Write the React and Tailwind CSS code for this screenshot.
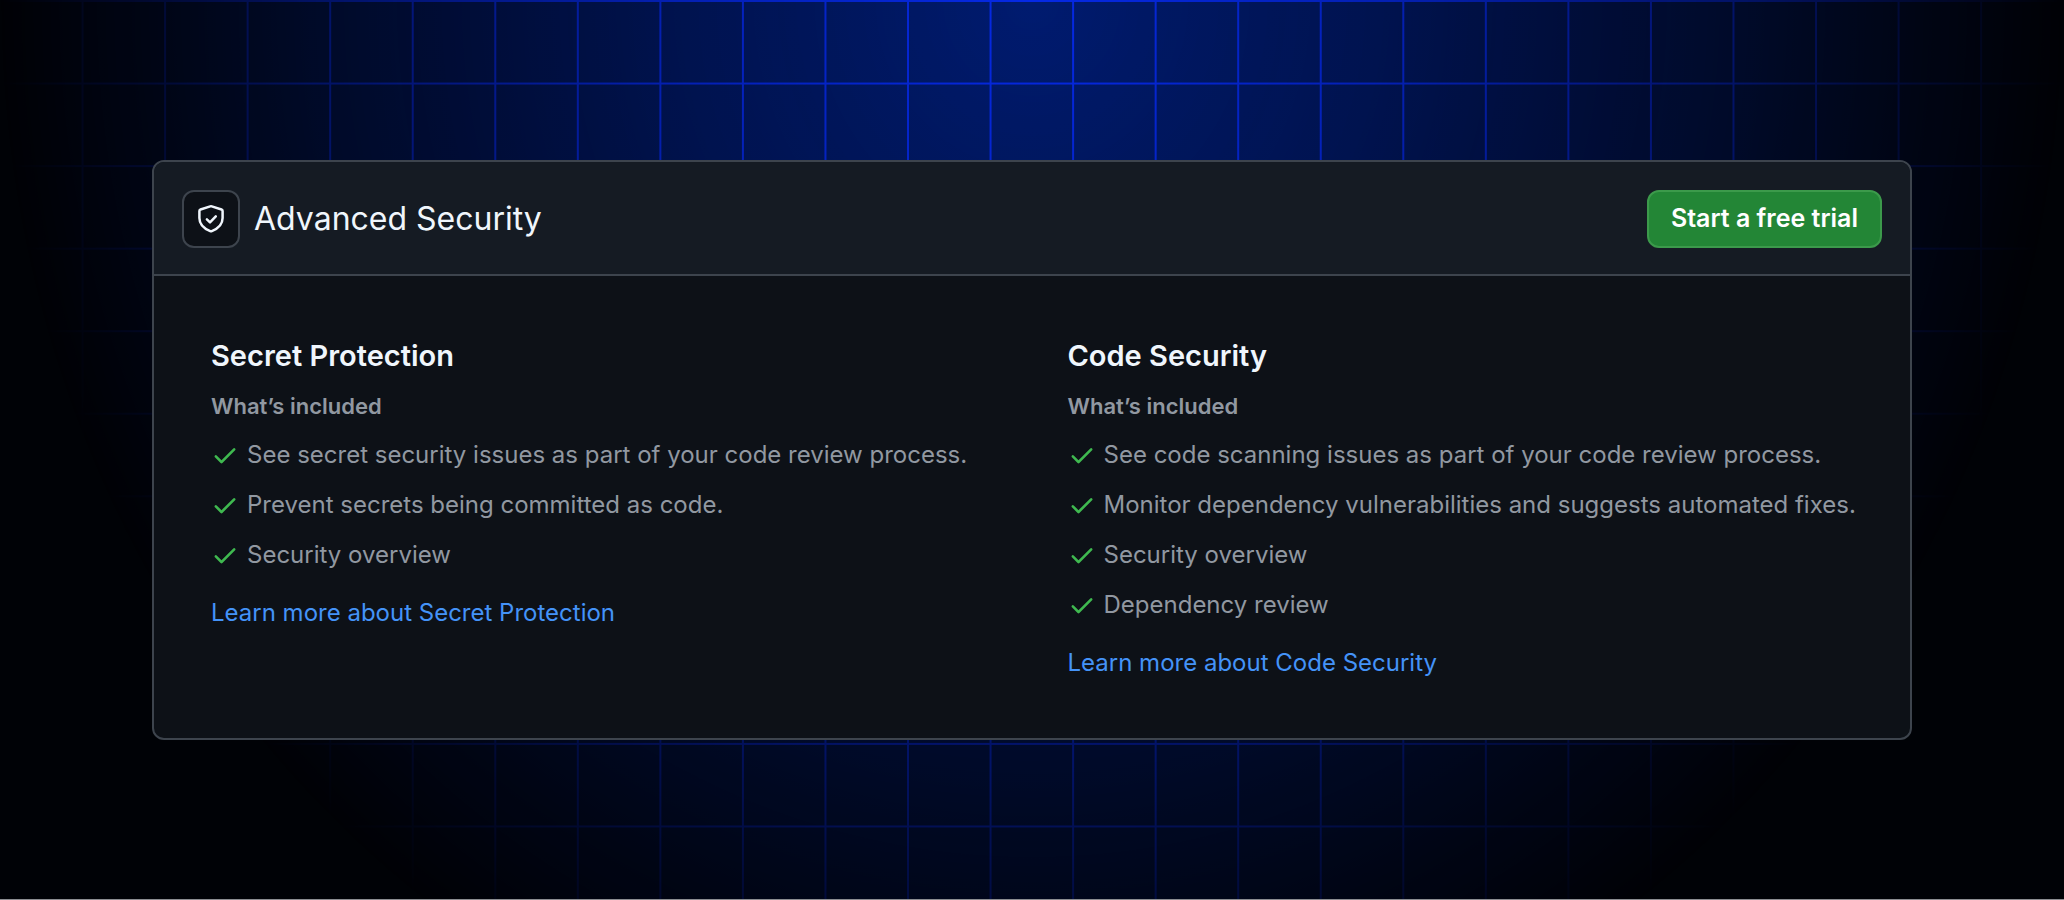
const products = [
  {
    name: "Secret Protection",
    features: [
      "See secret security issues as part of your code review process.",
      "Prevent secrets being committed as code.",
      "Security overview",
    ],
  },
  {
    name: "Code Security",
    features: [
      "See code scanning issues as part of your code review process.",
      "Monitor dependency vulnerabilities and suggests automated fixes.",
      "Security overview",
      "Dependency review",
    ],
  },
];

function CheckIcon({ className }) {
  return (
    <svg viewBox="0 0 16 16" fill="currentColor" aria-hidden="true" className={className}>
      <path d="M13.78 4.22a.75.75 0 0 1 0 1.06l-7.25 7.25a.75.75 0 0 1-1.06 0L2.22 9.28a.751.751 0 0 1 .018-1.042.751.751 0 0 1 1.042-.018L6 10.94l6.72-6.72a.75.75 0 0 1 1.06 0Z" />
    </svg>
  );
}

function ShieldCheckIcon({ className }) {
  return (
    <svg
      viewBox="0 0 30 30"
      fill="none"
      stroke="currentColor"
      strokeWidth="2.5"
      strokeLinecap="round"
      strokeLinejoin="round"
      aria-hidden="true"
      className={className}
    >
      <path d="M14.2 2.4 4.5 5.5a1.6 1.6 0 0 0-1.1 1.5V14c0 6 3.6 10.2 10.8 13.1a2.2 2.2 0 0 0 1.6 0C23 24.2 26.6 20 26.6 14V7a1.6 1.6 0 0 0-1.1-1.5l-9.7-3.1a2.6 2.6 0 0 0-1.6 0Z" />
      <path d="m10.9 15.4 3.1 3 5.8-6" />
    </svg>
  );
}

function Product({ name, features }) {
  return (
    <section>
      <h3 className="text-[29px] leading-9 font-semibold text-[#f0f6fc]">{name}</h3>
      <p className="mt-4 text-[22px] leading-8 font-semibold text-[#9198a1]">What’s included</p>
      <ul className="mt-4 flex flex-col gap-4">
        {features.map((feature) => (
          <li key={feature} className="flex items-center gap-2 text-2xl leading-[34px] text-[#9198a1]">
            <CheckIcon className="w-7 h-7 shrink-0 text-[#3fb950]" />
            <span>{feature}</span>
          </li>
        ))}
      </ul>
      <a href="#" className="mt-6 inline-block text-2xl leading-[34px] text-[#4493f8] hover:underline">
        Learn more about {name}
      </a>
    </section>
  );
}

export default function App() {
  return (
    <div className="relative min-h-screen bg-[#000206] border-b border-[#8b8d91] font-[Inter,sans-serif]">
      {/* Grid backdrop, fades out from the top center */}
      <div className="absolute inset-0 bg-[linear-gradient(to_right,#0529e6_2px,transparent_2px),linear-gradient(to_bottom,#0529e6_2px,transparent_2px),radial-gradient(50%_124%_at_50%_0,#001b70,#00124d)] bg-[size:4vw_4vw,4vw_4vw,100%_100%] bg-[position:-1px_0,0_0,0_0] [mask-image:radial-gradient(50%_124%_at_50%_0,black,rgb(0_0_0/0.77)_35%,rgb(0_0_0/0.42)_70%,transparent)]" />

      <main className="relative px-38 pt-40 pb-20">
        <div className="overflow-hidden rounded-xl border-2 border-[#3d444d] bg-[#0d1117]">
          {/* Header */}
          <header className="flex items-center justify-between border-b-2 border-[#3d444d] bg-[#151b23] px-7 pt-7 pb-[26px]">
            <div className="flex items-center gap-[14px]">
              <div className="flex h-[58px] w-[58px] items-center justify-center rounded-xl border-2 border-[#3d444d] bg-[#0d1117]">
                <ShieldCheckIcon className="h-[30px] w-[30px] text-[#f0f6fc]" />
              </div>
              <h2 className="text-[32px] leading-10 text-[#f0f6fc]">Advanced Security</h2>
            </div>
            <button
              type="button"
              className="h-[58px] rounded-xl border-2 border-[#3c9a4b] bg-[#238636] px-[22px] text-[25px] font-semibold text-white hover:bg-[#29903b]"
            >
              Start a free trial
            </button>
          </header>

          {/* Plans */}
          <div className="grid grid-cols-2 gap-[42px] pt-[62px] pr-7 pb-[58px] pl-[57px]">
            {products.map((product) => (
              <Product key={product.name} {...product} />
            ))}
          </div>
        </div>
      </main>
    </div>
  );
}
